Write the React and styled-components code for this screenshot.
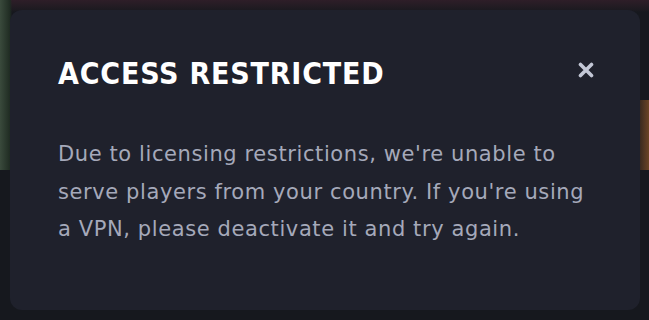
import React from 'react'
import styled, { createGlobalStyle } from 'styled-components'

const GlobalStyle = createGlobalStyle`
html, body {
    margin: 0;
    padding: 0;
    background: #16181e;
}
`

function App() {
    return (
        <>
            <GlobalStyle />
            <Backdrop>
                <Modal role="dialog" aria-labelledby="restricted-title">
                    <Header>
                        <Title id="restricted-title">ACCESS RESTRICTED</Title>
                        <CloseBtn aria-label="Close">
                            <svg width="16" height="16" viewBox="0 0 16 16">
                                <path d="M2.5 2.5 L13.5 13.5 M13.5 2.5 L2.5 13.5" stroke="currentColor" strokeWidth="3.6" strokeLinecap="round" />
                            </svg>
                        </CloseBtn>
                    </Header>
                    <Text>
                        Due to licensing restrictions, we're unable to serve players from your country. If you're using a VPN, please deactivate it and try again.
                    </Text>
                </Modal>
            </Backdrop>
        </>
    )
}

const Backdrop = styled.div`
width: 649px;
height: 320px;
box-sizing: border-box;
padding: 10px 9px 10px 10px;
background:
    linear-gradient(90deg, #3a4a3c 0px, #1f2b22 10px, transparent 12px) 0 0 / 100% 170px no-repeat,
    linear-gradient(270deg, #6b4426 0px, #3a2a20 9px, transparent 11px) 0 100px / 100% 70px no-repeat,
    linear-gradient(180deg, #2e1e28 0px, #1c1a20 10px, transparent 12px),
    #16181e;
display: flex;
`

const Modal = styled.div`
flex: 1;
background: #1f212c;
border-radius: 12px;
padding: 47px 46px 0 48px;
box-sizing: border-box;
display: flex;
flex-direction: column;
gap: 45px;
`

const Header = styled.div`
display: flex;
align-items: flex-start;
justify-content: space-between;
`

const Title = styled.h2`
margin: 0;
font-family: "DejaVu Sans Condensed", "DejaVu Sans", sans-serif;
font-weight: 700;
font-size: 30px;
line-height: 34px;
letter-spacing: 0.8px;
color: #ffffff;
`

const CloseBtn = styled.button`
display: flex;
align-items: center;
justify-content: center;
margin-top: 5px;
background: none;
border: none;
padding: 0;
color: #c3c7d6;
cursor: pointer;
`

const Text = styled.p`
margin: 0;
font-family: "DejaVu Sans", sans-serif;
font-size: 21px;
line-height: 37.5px;
letter-spacing: 0.6px;
color: #a5a9ba;
max-width: 540px;
`

export default App
